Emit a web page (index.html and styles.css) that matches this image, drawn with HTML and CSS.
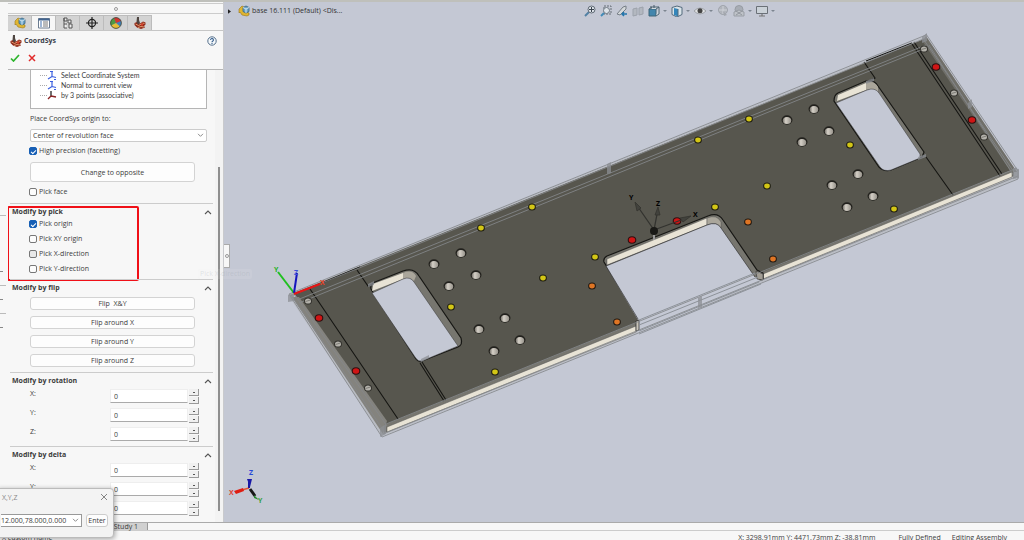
FILE: index.html
```html
<!DOCTYPE html>
<html lang="en">
<head>
<meta charset="utf-8">
<title>CoordSys – Assembly</title>
<link rel="stylesheet" href="styles.css">
</head>
<body>
<svg class="defs" aria-hidden="true">
  <symbol id="asm" viewBox="0 0 12 12"><path d="M1 4 4 1l2 1v3l2 2 3 1v2l-2 1-5-1-2-3-1 1z" fill="#e0b531" stroke="#9a7718" stroke-width=".6"/><path d="M5 2.500 8 1l3 1.500v4L8 8 5 6.500z" fill="#6ba3c6" stroke="#32617f" stroke-width=".8"/><path d="M5 2.500 8 4l3-1.500M8 4v4" stroke="#dcedf6" stroke-width=".9" fill="none"/></symbol>
  <symbol id="cam" viewBox="0 0 12 12"><path d="M.5 6 3 5l3 1.500L9 4.500l2.500 1v2L10 9l1 1.500-4 1.500-4-1.500L.5 8z" fill="#8f2a1c"/><path d="M1.500 7l3 1.500 3-1.500M4 10.500 7 9.500l3 .5M8.500 6l2 .5" stroke="#e8a877" stroke-width=".9" fill="none"/><path d="M3 0h2v3l1 3-2 1.500L2.500 5z" fill="#4e4540"/><circle cx="8" cy="7.500" r="1.200" fill="#d8452f"/></symbol>
  <symbol id="caret" viewBox="0 0 4 4"><path d="M0 1h4L2 3z" fill="#7d8590"/></symbol>
  <symbol id="up" viewBox="0 0 8 6"><path d="M1 5 4 2l3 3" fill="none" stroke="#555" stroke-width="1.100"/></symbol>
  <symbol id="axes" viewBox="0 0 10 10"><path d="M5 1v6M5 6.500l4 1M5 6.500 1 9M3 1.500h3M7 9.500h2" fill="none" stroke="#3c60e0" stroke-width="1.200"/></symbol>
</svg>

<div class="app">
  <div class="work">
    <aside class="rail" aria-hidden="true"><i></i><i></i><i></i><i></i><i></i><i></i></aside>

    <section class="panel" aria-label="CoordSys">
      <div class="grip"><i></i></div>
      <nav class="tabs">
        <button aria-label="Assembly"><svg class="ic"><use href="#asm"/></svg></button>
        <button aria-label="Properties" class="active"><svg class="ic" viewBox="0 0 12 12"><path d="M.5 1.500h11v9.500H.5z" fill="#fff" stroke="#6c7c90"/><path d="M.5 1.500h11v2H.5z" fill="#42648f"/><path d="M2 5h2M2 7h2M2 9h2" stroke="#3e6fae" stroke-width="1.200"/><path d="M5 5h5M5 7h5M5 9h5" stroke="#666" stroke-width=".9"/></svg></button>
        <button aria-label="Configurations"><svg class="ic" viewBox="0 0 12 12"><path d="M2 1h3v3H2zM2 1v10h3M2 7h3M6 3h3v3H6zM7 7h3v4H7z" fill="#eee" stroke="#555"/></svg></button>
        <button aria-label="Dimensions"><svg class="ic" viewBox="0 0 12 12"><circle cx="6" cy="6" r="3.600" fill="none" stroke="#222" stroke-width="1.200"/><path d="M6 0v12M0 6h12" stroke="#222" stroke-width="1.200"/></svg></button>
        <button aria-label="Appearance"><svg class="ic" viewBox="0 0 12 12"><circle cx="6" cy="6" r="5.400" fill="#3d82bd"/><path d="M6 6 1 8.500A5.400 5.400 0 0 1 4 1z" fill="#4e9a42"/><path d="M6 6 4 1a5.400 5.400 0 0 1 7 3z" fill="#d2372f"/><path d="M6 6 1 8.500a5.400 5.400 0 0 0 9 1z" fill="#e6bd37"/><circle cx="6" cy="6" r="5.400" fill="none" stroke="#443" stroke-width=".8"/></svg></button>
        <button aria-label="CAM"><svg class="ic"><use href="#cam"/></svg></button>
      </nav>
      <header class="title">
        <svg class="ic"><use href="#cam"/></svg><h1>CoordSys</h1>
        <button class="help" aria-label="Help"><svg viewBox="0 0 10 10"><circle cx="5" cy="5" r="4.200" fill="#f4f8fb" stroke="#56708b"/><path d="M3.600 4a1.400 1.400 0 1 1 2 1.200Q5 5.500 5 6.200M5 7v1" fill="none" stroke="#345c8b" stroke-width="1.100"/></svg></button>
      </header>
      <div class="confirm">
        <button aria-label="OK"><svg viewBox="0 0 10 8"><path d="M1 4.500 3.500 7 9 1" fill="none" stroke="#2db52d" stroke-width="1.700"/></svg></button>
        <button aria-label="Cancel"><svg viewBox="0 0 10 8"><path d="M2 1l6 6M8 1 2 7" fill="none" stroke="#e12a2a" stroke-width="1.500"/></svg></button>
      </div>

      <div class="scroller">
        <form class="form">
          <ul class="tree">
            <li><svg><use href="#axes"/></svg>Select Coordinate System</li>
            <li><svg><use href="#axes"/></svg>Normal to current view</li>
            <li><svg viewBox="0 0 10 10"><path d="M4 1v5" stroke="#333" stroke-width="1.400"/><path d="M4 6l5 1M4 6 1 9" stroke="#8a2525" stroke-width="1.400"/></svg>by 3 points (associative)</li>
          </ul>
          <label class="caption" for="origin">Place CoordSys origin to:</label>
          <div class="combo"><select id="origin"><option>Center of revolution face</option></select><svg viewBox="0 0 8 6"><path d="M1 1l3 3 3-3" fill="none" stroke="#777"/></svg></div>
          <label class="check prec"><input type="checkbox" checked>High precision (facetting)</label>
          <button type="button" class="btn tall">Change to opposite</button>
          <label class="check face"><input type="checkbox">Pick face</label>

          <section class="group">
            <h2>Modify by pick<svg><use href="#up"/></svg></h2>
            <div class="checks">
              <label class="check"><input type="checkbox" checked>Pick origin</label>
              <label class="check"><input type="checkbox">Pick XY origin</label>
              <label class="check"><input type="checkbox" class="hover">Pick X-direction</label>
              <label class="check"><input type="checkbox">Pick Y-direction</label>
            </div>
            <div class="marker"></div>
          </section>

          <section class="group">
            <h2>Modify by flip<svg><use href="#up"/></svg></h2>
            <div class="flips">
              <button type="button" class="btn">Flip &nbsp;X&amp;Y</button>
              <button type="button" class="btn">Flip around X</button>
              <button type="button" class="btn">Flip around Y</button>
              <button type="button" class="btn">Flip around Z</button>
            </div>
          </section>

          <section class="group">
            <h2>Modify by rotation<svg><use href="#up"/></svg></h2>
            <div class="spins">
              <div class="spin"><label for="rx">X:</label><input id="rx" value="0"><span class="steps"><button type="button" aria-label="Increase"></button><button type="button" aria-label="Decrease"></button></span></div>
              <div class="spin"><label for="ry">Y:</label><input id="ry" value="0"><span class="steps"><button type="button" aria-label="Increase"></button><button type="button" aria-label="Decrease"></button></span></div>
              <div class="spin"><label for="rz">Z:</label><input id="rz" value="0"><span class="steps"><button type="button" aria-label="Increase"></button><button type="button" aria-label="Decrease"></button></span></div>
            </div>
          </section>

          <section class="group">
            <h2>Modify by delta<svg><use href="#up"/></svg></h2>
            <div class="spins">
              <div class="spin"><label for="dx">X:</label><input id="dx" value="0"><span class="steps"><button type="button" aria-label="Increase"></button><button type="button" aria-label="Decrease"></button></span></div>
              <div class="spin"><label for="dy">Y:</label><input id="dy" value="0"><span class="steps"><button type="button" aria-label="Increase"></button><button type="button" aria-label="Decrease"></button></span></div>
              <div class="spin"><label for="dz">Z:</label><input id="dz" value="0"><span class="steps"><button type="button" aria-label="Increase"></button><button type="button" aria-label="Decrease"></button></span></div>
            </div>
          </section>
        </form>
        <div class="track"><i></i></div>
      </div>
    </section>

    <main class="view">
      <svg class="scene" viewBox="224 2 800 520" preserveAspectRatio="xMinYMin meet" role="img" aria-label="Base plate assembly">
        <defs>
          <linearGradient id="hg"><stop offset="0" stop-color="#77736c"/><stop offset=".35" stop-color="#d5d0c7"/><stop offset="1" stop-color="#96928a"/></linearGradient>
          <g id="w"><ellipse rx="5.500" ry="4.700" fill="#22211d"/><ellipse cy=".5" rx="4.200" ry="3.500" fill="url(#hg)"/></g>
          <g id="s"><ellipse rx="4" ry="3.500" fill="#33322e"/><ellipse rx="3" ry="2.600" fill="#b4b2ab"/><path d="M-2.500.5 2.500-1" stroke="#66645f" stroke-width=".7"/></g>
          <g id="y"><ellipse rx="3.900" ry="3.500" fill="#201f12"/><ellipse rx="2.800" ry="2.400" fill="#d3c616"/></g>
          <g id="o"><ellipse rx="3.900" ry="3.500" fill="#241a12"/><ellipse rx="2.800" ry="2.400" fill="#df7524"/></g>
          <g id="r"><ellipse rx="4.300" ry="3.800" fill="#301010"/><ellipse rx="3.200" ry="2.800" fill="#cf1515"/></g>
        </defs>
        <path d="M290 294 926 36l91 136-1 7L382 436l-92-138z" fill="#b9bcc3"/>
        <path d="M294 293 924 39l90 132L384 430z" fill="#57564e"/>
        <path d="M292 297l7 0 88 124-4 13z" fill="#84837e"/>
        <path d="M926 36l91 136-6 0-88-130z" fill="#706f69"/>
        <path d="M384 425 638 322v8L384 433zM760 273l254-104v7L760 280z" fill="#77766f"/>
        <path d="M387 427 636 326v6L387 432zM763 274l249-102v5L763 279z" fill="#e8e3d5" stroke="#555" stroke-width=".5"/>

        <path d="M371 289Q370 284 375 282L403 271Q414 267 419 276L461 338Q463 345 458 347L422 361Q419 363 416 359z" fill="#77766f" stroke="#171714" stroke-width="1.200"/>
        <path d="M373 286V284L403 273v6L372 291z" fill="#e8e3d5"/>
        <path d="M403 273q9-4 13 3l-2 5q-4-5-11-2z" fill="#aaa69b"/>
        <path d="M372 293 403 279Q410 276 414 282L458 346 422 361Q418 362 415 357z" fill="#c4c8d4" stroke="#333" stroke-width=".5"/>

        <path d="M834 101Q834 95 838 93L866 81Q874 79 878 86L924 152 922 157 891 170Q884 172 879 167z" fill="#77766f" stroke="#171714" stroke-width="1.200"/>
        <path d="M838 95l28-12v7l-29 11z" fill="#e8e3d5"/>
        <path d="M866 83q8-3 12 4v5q-4-5-12-2z" fill="#aaa69b"/>
        <path d="M836 103 867 90Q875 87 879 93L920 154v4l-29 12Q884 172 880 167z" fill="#c4c8d4" stroke="#333" stroke-width=".5"/>

        <path d="M604 262Q603 258 607 256L708 216Q718 212 723 220L757 270 763 273v6l-5 2L638 330 639 319z" fill="#77766f" stroke="#171714" stroke-width="1.200"/>
        <path d="M607 259 707 218v7L607 265z" fill="#e8e3d5" stroke="#444" stroke-width=".4"/>
        <path d="M707 218q10-4 14 4v6q-4-7-14-3z" fill="#aaa69b" stroke="#444" stroke-width=".4"/>
        <path d="M606 266 707 225Q717 221 721 228L755 277 761 281 638 334V320z" fill="#c4c8d4"/>
        <path d="M606 266 707 225Q717 221 721 228L755 277M606 266 638 319" fill="none" stroke="#333" stroke-width=".7"/>
        <path d="M756 271l7 3v6l-6-1z" fill="#a19d94" stroke="#333" stroke-width=".6"/>
        <path d="M636 321v10l3-1v-10z" fill="#c8c4ba" stroke="#222" stroke-width=".7"/>

        <g fill="none" stroke="#151512" stroke-width="1.100">
          <path d="M310 289 398 419M357 270l11 16 5-2M420 363l24 38M422 362l24 38M912 44 1000 176M914 42l88 132M864 62l11 16-6 3M926 157l27 38M360 267 310 288M912 43 866 61"/>
        </g>
        <g fill="none" stroke="#85888b" stroke-width="1" opacity=".85">
          <path d="M289 294 926 35M290 296 926 38M297 300 926 45M299 303 926 48"/>
          <path d="M289 294l93 143M291 295l93 136M294 294l93 132"/>
          <path d="M382 437 1018 179M383 434 1018 176M386 424 1017 168"/>
          <path d="M926 34l92 137M924 40l90 132M929 45l85 131M1018 170v9"/>
        </g>
        <path d="M639 320 755 273M639 325 758 277M639 331l120-49M639 334l122-50" fill="none" stroke="#8d9299" stroke-width="1"/>
        <g fill="#8c8f94" opacity=".75"><path d="M288 295l6-2v8l-6 1zM380 428l6-4v10l-6 3zM1013 168l6 1v9l-6 1zM922 37l5-4v8l-5 2z"/><path d="M607 164l4-2v11l-4 1zM698 298l4-2v11l-4 1zM368 284l6-3v4l-6 2zM421 359l8-4v3l-8 4zM866 81l8-3v3l-8 3zM918 157l8-3v3l-8 3zM968 103l4-4v8l-4 2z"/></g>

        <g>
          <use href="#w" x="787" y="120"/><use href="#w" x="814" y="109"/><use href="#w" x="802" y="142"/><use href="#w" x="829" y="131"/><use href="#w" x="832" y="185"/><use href="#w" x="858" y="174"/><use href="#w" x="847" y="207"/><use href="#w" x="873" y="196"/>
          <use href="#w" x="434" y="264"/><use href="#w" x="461" y="253"/><use href="#w" x="449" y="286"/><use href="#w" x="476" y="275"/><use href="#w" x="479" y="329"/><use href="#w" x="505" y="318"/><use href="#w" x="494" y="351"/><use href="#w" x="520" y="340"/>
          <use href="#y" x="749" y="119"/><use href="#y" x="698" y="140"/><use href="#y" x="532" y="207"/><use href="#y" x="481" y="228"/><use href="#y" x="767" y="186"/><use href="#y" x="715" y="207"/><use href="#y" x="595" y="257"/><use href="#y" x="543" y="278"/><use href="#y" x="451" y="307"/><use href="#y" x="495" y="372"/><use href="#y" x="850" y="145"/><use href="#y" x="894" y="209"/>
          <use href="#o" x="748" y="222"/><use href="#o" x="773" y="259"/><use href="#o" x="592" y="286"/><use href="#o" x="617" y="322"/>
          <use href="#r" x="632" y="240"/><use href="#r" x="677" y="221"/><use href="#r" x="319" y="318"/><use href="#r" x="356" y="371"/><use href="#r" x="936" y="67"/><use href="#r" x="972" y="120"/>
          <use href="#s" x="308" y="301"/><use href="#s" x="338" y="344"/><use href="#s" x="368" y="388"/><use href="#s" x="924" y="49"/><use href="#s" x="954" y="93"/><use href="#s" x="984" y="137"/>
        </g>

        <g stroke="#33332f" fill="#42423d" stroke-width="1.300"><path d="M654 230 636 204M654 230l4-21M654 230l30-11"/><path d="M635 202l6 6-4 3zM658 207l2 8h-5zM691 216l-8 6-3-4z" stroke-width=".8"/></g>
        <circle cx="654" cy="231" r="4" fill="#191916"/><path d="M654 235v5" stroke="#999" stroke-width="2"/>
        <g class="axis"><text x="629" y="200">Y</text><text x="656" y="206">Z</text><text x="693" y="217">X</text></g>

        <path d="M294 293 278 272" stroke="#20c020" stroke-width="2"/><path d="M294 293l3-20" stroke="#1515bd" stroke-width="2"/><path d="M294 294l26-10" stroke="#e81515" stroke-width="2"/>
        <g class="axis"><text x="274" y="272" fill="#20b020">Y</text><text x="294" y="275" fill="#3c50d8">Z</text><text x="320" y="285" fill="#e84020">X</text></g>

        <path d="M249 488l-7 2" stroke="#e05030" stroke-width="1.500"/><path d="M243 488l-9 3 2 3 8-3z" fill="#df1d12"/>
        <path d="M249 488v-6" stroke="#1818a0" stroke-width="2"/><path d="M247 479h5l-2 8z" fill="#1818a8"/>
        <path d="M250 489l5 7" stroke="#171717" stroke-width="3"/><path d="M254 495l5 5-5-2z" fill="#288a30"/>
        <g class="axis"><text x="229" y="495" fill="#e04030">X</text><text x="249" y="475" fill="#2849d8">Z</text><text x="258" y="503" fill="#35a040">Y</text></g>
      </svg>

      <div class="overlay">
        <div class="crumb"><svg class="tri" viewBox="0 0 4 6"><path d="M0 0l4 3-4 3z" fill="#222"/></svg><svg class="ic"><use href="#asm"/></svg><span>base 16.111 (Default) &lt;Dis...</span></div>
        <div class="tools">
          <button aria-label="Zoom to fit"><svg viewBox="0 0 12 12"><path d="M1 11l4-4" stroke="#5281a4" stroke-width="2"/><circle cx="7.500" cy="4.500" r="3.500" fill="#dde3e9" stroke="#606a74"/><path d="M7.500 2v5M5 4.500h5" stroke="#39434e"/></svg></button>
          <button aria-label="Zoom to area"><svg viewBox="0 0 12 12"><path d="M4 1h7v8H4z" fill="none" stroke="#666e76" stroke-dasharray="2 1"/><path d="M1 11l3-3" stroke="#418bb8" stroke-width="2"/><circle cx="6.500" cy="5.500" r="3" fill="#dde3e9" stroke="#707a84"/></svg></button>
          <button aria-label="Previous view"><svg viewBox="0 0 12 12"><path d="M1 9 7 2l3-1v3L4 10z" fill="#d4d8da" stroke="#777f87"/><path d="M11 9H6m2-2L6 9l2 2" fill="none" stroke="#2476ac" stroke-width="1.500"/></svg></button>
          <button aria-label="Section view"><svg viewBox="0 0 12 12"><path d="M1 4l4-1v7l-4 1zM7 3l4-1v7l-4 1z" fill="#b3b8c0" stroke="#9ca2ab"/></svg></button>
          <button aria-label="View orientation"><svg viewBox="0 0 12 12"><path d="M1 4h7v7H1z" fill="#4386ad" stroke="#416779"/><path d="M1 4l3-2h7L8 4M11 2v7l-3 2" fill="#d4dbe0" stroke="#4e6573"/><path d="M3 1v3M6 0v3" stroke="#465b68"/></svg></button><svg class="caret"><use href="#caret"/></svg>
          <button aria-label="Display style"><svg viewBox="0 0 12 12"><path d="M1 2.500l5-1.500 5 1.500v7L6 12 1 9.500z" fill="#d9e3e8" stroke="#536a7c"/><path d="M3 3l4 1v7.500L3 10z" fill="#3386bb"/><path d="M7 4v7.500" stroke="#536a7c"/></svg></button><svg class="caret"><use href="#caret"/></svg>
          <button aria-label="Hide or show items"><svg viewBox="0 0 12 12"><path d="M0 6q6-6 12 0-6 6-12 0z" fill="#e1e3e4" stroke="#8b8f94" stroke-width=".7"/><circle cx="6" cy="5.800" r="2.500" fill="#444"/></svg></button><svg class="caret"><use href="#caret"/></svg>
          <button aria-label="Edit appearance"><svg viewBox="0 0 12 12"><circle cx="6" cy="5" r="4.500" fill="#b0b4bb" stroke="#a0a5ad"/><path d="M6 1v8M2 5h8" stroke="#ced1d7"/><path d="M6 6l4 4-3 1z" fill="#a2a6ad"/></svg></button>
          <button aria-label="Apply scene"><svg viewBox="0 0 12 12"><circle cx="6" cy="4.500" r="4" fill="#a8adb5" stroke="#979ca3"/><path d="M1 7l5-2 5 2v4H1z" fill="#bec2c8" stroke="#999ea5"/><path d="M3 10l6-4M3 6l6 4" stroke="#92979e"/></svg></button><svg class="caret"><use href="#caret"/></svg>
          <button aria-label="View settings"><svg viewBox="0 0 12 12"><path d="M.5 1.500h11v7H.5z" fill="#cad1d7" stroke="#6a7077"/><path d="M6 9v2M3 11h6" stroke="#777" stroke-width="1.200"/></svg></button><svg class="caret"><use href="#caret"/></svg>
        </div>
      </div>
      <button class="splitter" aria-label="Collapse panel"><i></i></button>
      <div class="ghost">Pick X-direction</div>
    </main>
  </div>

  <div class="doctabs"><button>Study 1</button></div>
  <footer class="status"><span class="hint">X custom name</span><span class="pos">X: 3298.91mm Y: 4471.73mm Z: -38.81mm</span><span>Fully Defined</span><span>Editing Assembly</span></footer>

  <div class="dialog" role="dialog" aria-labelledby="dlg">
    <div class="dhead"><label id="dlg" for="xyz">X,Y,Z</label><button aria-label="Close"><svg viewBox="0 0 8 8"><path d="M1 1l6 6M7 1 1 7" stroke="#777" stroke-width=".9"/></svg></button></div>
    <div class="dbody">
      <div class="combo"><select id="xyz"><option>12.000,78.000,0.000</option></select><svg viewBox="0 0 8 6"><path d="M1 1l3 3 3-3" fill="none" stroke="#777"/></svg></div>
      <button class="enter">Enter</button>
    </div>
  </div>
</div>
</body>
</html>
```
FILE: styles.css
```css
* { box-sizing: border-box; }
body { margin: 0; font: 7px/10px "Open Sans", "Noto Sans", sans-serif; color: #3c3c3c; background: #f7f7f7; }
button, input, select { font: inherit; color: inherit; margin: 0; padding: 0; border: 0; background: none; }
svg { display: block; flex: none; }
.defs { position: absolute; width: 0; height: 0; }
h1, h2, ul { margin: 0; padding: 0; }

.app { position: relative; height: 100vh; min-height: 540px; display: flex; flex-direction: column; overflow: hidden; border-top: 2px solid #bfc0bb; }
.work { flex: 1; min-height: 0; display: flex; }

.rail { width: 8px; padding-top: 213px; display: flex; flex-direction: column; gap: 13px; }
.rail i { height: 1px; width: 6px; background: #bbb; }
.rail i:nth-child(2) { margin-top: 42px; width: 3px; }
.rail i:nth-child(even) { width: 3px; background: #888; }

.panel { flex: 0 0 216px; display: flex; flex-direction: column; background: #f7f7f7; border-right: 1px solid #c9cacd; min-height: 0; }
.grip { height: 11px; margin-top: 1px; border-top: 1px solid #ccc; border-bottom: 1px solid #ccc; display: grid; place-items: center; }
.grip i { width: 4px; height: 4px; border: 1px solid #999; border-radius: 50%; }
.tabs { display: flex; margin-top: 1px; border-bottom: 1px solid #c6c6c6; }
.tabs button { width: 24px; height: 15px; display: grid; place-items: center; background: #d3d3d3; border: 1px solid #bcbcbc; border-width: 1px 1px 0 0; }
.tabs .active { background: #f7f7f7; }
.ic { width: 12px; height: 12px; }
.title { display: flex; align-items: center; gap: 2px; height: 20px; padding: 0 6px 0 2px; }
h1 { font-size: 7px; line-height: 10px; color: #3a3d48; }
.help { margin-left: auto; }
.help svg { width: 10px; height: 10px; }
.confirm { display: flex; align-items: flex-start; gap: 7px; height: 19px; padding: 3px 2px 0; border-bottom: 1px solid #b5b5b5; }
.confirm svg { width: 10px; height: 8px; }

.scroller { flex: 1; min-height: 0; display: flex; overflow: hidden; }
.form { flex: 1; padding: 0 2px; }
.track { width: 8px; padding: 97px 3px 11px; background: #f3f3f3; }
.track i { display: block; height: 100%; width: 2px; background: #8f8f8f; }

.tree { list-style: none; height: 39px; margin: 0 6px 0 20px; padding: 0 0 0 9px; background: #fff; border: 1px solid #b5b5b5; border-top: 0; font-family: Lato, "Open Sans", sans-serif; }
.tree li { display: flex; align-items: center; gap: 3px; height: 10px; }
.tree li::before { content: ""; width: 7px; border-top: 1px dotted #aaa; }
.tree svg { width: 10px; height: 10px; margin-right: 1px; margin-left: -3px; }
.caption { display: block; margin: 5px 0 5px 20px; }
.combo { display: grid; align-items: center; height: 13px; background: #fff; border: 1px solid #ccc; border-radius: 2px; }
.combo > * { grid-area: 1 / 1; }
.combo select { appearance: none; width: 100%; height: 11px; padding-left: 2px; }
.combo svg { justify-self: end; width: 7px; height: 5px; margin-right: 2px; pointer-events: none; }
.form .combo { margin: 0 6px 0 20px; }
.check { display: flex; align-items: center; gap: 2px; height: 10px; margin-left: 19px; }
.check input { appearance: none; width: 8px; height: 8px; background: #fcfcfc; border: 1px solid #777; border-radius: 2px; }
.check .hover { background: #e8e8e8; }
.check input:checked { border-color: #175fb5; background: #175fb5; display: grid; place-items: center; }
.check input:checked::after { content: ""; width: 4px; height: 2px; border: solid #fff; border-width: 0 0 1px 1px; rotate: -45deg; }
.prec { margin-top: 4px; }
.btn { display: block; width: 165px; height: 13px; line-height: 11px; background: #fdfdfd; border: 1px solid #d3d3d3; border-radius: 3px; }
.tall { height: 20px; margin: 6px 0 5px 20px; }
.face { margin-bottom: 6px; }

.group { position: relative; border-top: 1px solid #ccc; padding: 3px 0 5px; }
h2 { display: flex; justify-content: space-between; font-size: 7px; line-height: 10px; padding: 0 1px 0 2px; }
h2 svg { width: 8px; height: 6px; margin-top: 2px; }
.checks { display: grid; gap: 5px; padding: 2px 0 0; }
.marker { position: absolute; left: -3px; top: 2px; width: 132px; height: 75px; border: 2px solid #f01018; border-radius: 2px; pointer-events: none; }
.flips { display: grid; gap: 6px; padding: 4px 0 0 20px; }
.spins { display: grid; gap: 5px; padding: 3px 0 0 20px; }
.spin { display: flex; align-items: flex-start; height: 14px; }
.spin label { width: 80px; }
.spin input { width: 78px; height: 14px; padding-left: 3px; background: #fff; border: 1px solid #eee; border-bottom-color: #aaa; }
.steps { display: grid; gap: 1px; width: 10px; margin-left: 1px; }
.steps button { height: 7px; display: grid; place-items: center; background: #f0f0f0; border: solid #999; border-width: 0 1px 1px 0; }
.steps button::before { content: ""; width: 2px; height: 1px; background: #555; }

.view { position: relative; flex: 1; min-width: 0; background: #c4c8d4; }
.scene { width: 100%; height: 100%; }
.axis { font: bold 7px "Open Sans", sans-serif; }
.overlay { position: absolute; inset: 2px 0 auto 0; display: grid; grid-template-columns: 360px 1fr; align-items: center; color: #333; }
.crumb { display: flex; align-items: center; padding-left: 4px; }
.crumb .tri { width: 3px; height: 5px; margin-right: 7px; }
.crumb span { margin-left: 2px; }
.tools { display: flex; align-items: center; gap: 4px; height: 14px; }
.tools button svg { width: 12px; height: 12px; }
.tools .caret { width: 4px; height: 4px; margin: 0 0 0 -1px; }
.splitter { position: absolute; left: 0; top: 242px; width: 6px; height: 24px; background: #f7f7f7; border: 1px solid #aaa; border-left: 0; display: grid; place-items: center; }
.splitter i { width: 4px; height: 4px; border: 1px solid #999; border-radius: 50%; }
.ghost { position: absolute; left: -26px; top: 267px; padding: 0 2px; white-space: nowrap; color: rgb(150 160 170 / .25); background: rgb(240 240 240 / .12); border-radius: 2px; pointer-events: none; }

.doctabs { height: 9px; padding-left: 90px; background: #f7f7f7; border-top: 1px solid #aaa; border-bottom: 1px solid #ccc; display: flex; }
.doctabs button { width: 58px; padding-right: 9px; text-align: right; line-height: 7px; background: #d0d0d0; border-right: 1px solid #999; }
.status { height: 9px; display: flex; justify-content: flex-end; gap: 11px; padding: 2px 17px 0 0; white-space: nowrap; overflow: hidden; }
.hint { margin-right: auto; padding-left: 2px; }
.pos { margin-right: 12px; }

.dialog { position: absolute; left: -4px; bottom: 2px; width: 118px; height: 50px; padding: 4px 5px 0 4px; background: #f3f3f3; border: 1px solid #bbb; border-radius: 4px; box-shadow: 1px 1px 5px #0005; }
.dhead { display: flex; justify-content: space-between; align-items: flex-start; color: #888; padding-left: 1px; height: 21px; }
.dhead svg { width: 8px; height: 8px; }
.dbody { display: flex; justify-content: space-between; align-items: center; }
.dbody .combo { width: 81px; border-color: #999; border-left: 0; border-radius: 0; }
.dbody .combo select { padding-left: 0; }
.enter { width: 22px; height: 13px; line-height: 11px; background: #fdfdfd; border: 1px solid #ccc; border-radius: 3px; }
```
